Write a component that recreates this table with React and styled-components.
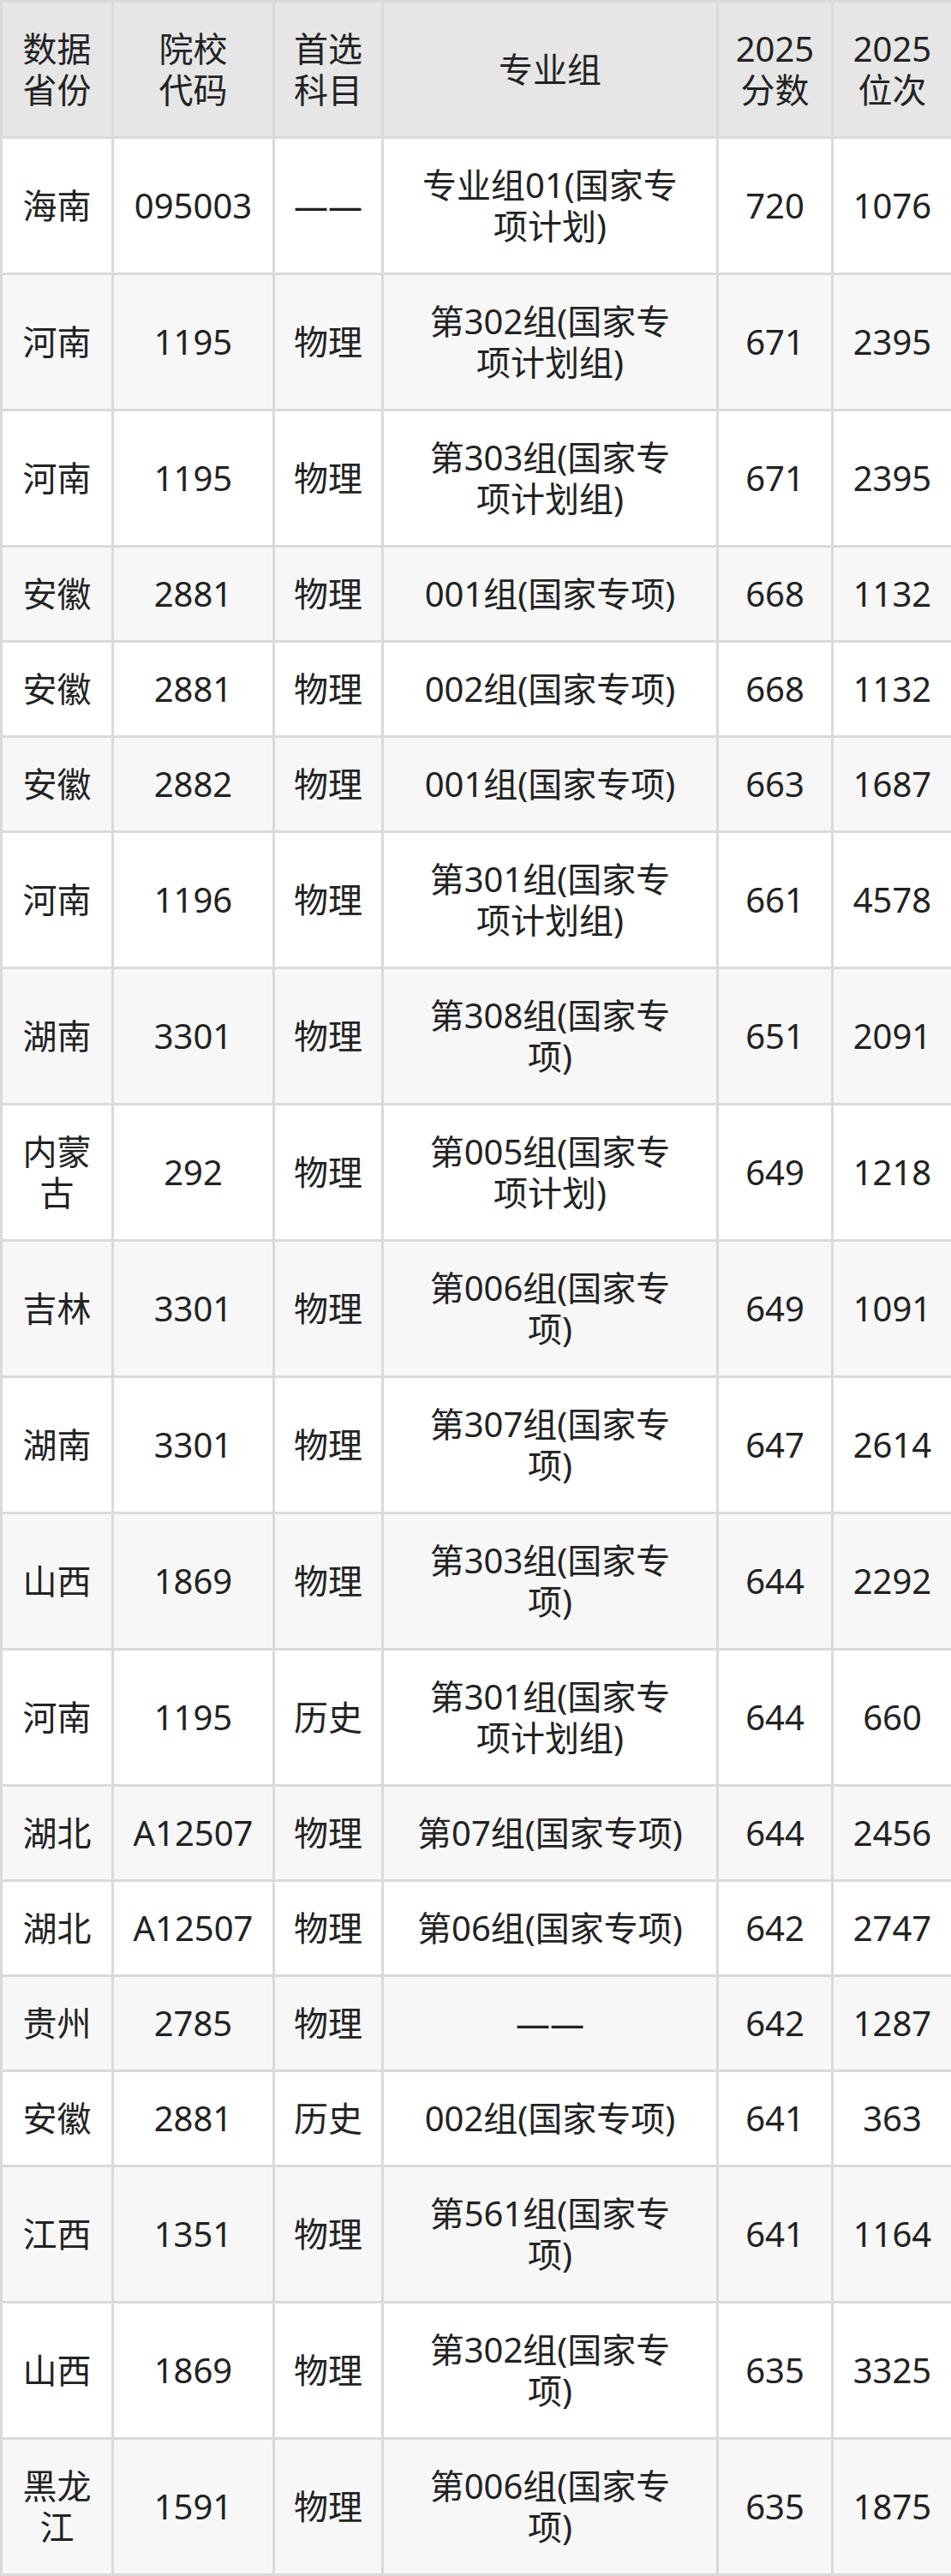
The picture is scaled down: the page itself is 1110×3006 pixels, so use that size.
import React from "react";
import styled, { createGlobalStyle } from "styled-components";

const GlobalStyle = createGlobalStyle`
	html, body {
		margin: 0;
		padding: 0;
		background: #ffffff;
	}
	body {
		font-family: "Noto Sans", "Noto Sans CJK SC", sans-serif;
		color: #222222;
	}
`;

const headers = ["数据\n省份", "院校\n代码", "首选\n科目", "专业组", "2025\n分数", "2025\n位次"];

const widths = [130, 188, 127, 391, 134, 140];

const rows = [
	["海南", "095003", "——", "专业组01(国家专\n项计划)", "720", "1076"],
	["河南", "1195", "物理", "第302组(国家专\n项计划组)", "671", "2395"],
	["河南", "1195", "物理", "第303组(国家专\n项计划组)", "671", "2395"],
	["安徽", "2881", "物理", "001组(国家专项)", "668", "1132"],
	["安徽", "2881", "物理", "002组(国家专项)", "668", "1132"],
	["安徽", "2882", "物理", "001组(国家专项)", "663", "1687"],
	["河南", "1196", "物理", "第301组(国家专\n项计划组)", "661", "4578"],
	["湖南", "3301", "物理", "第308组(国家专\n项)", "651", "2091"],
	["内蒙\n古", "292", "物理", "第005组(国家专\n项计划)", "649", "1218"],
	["吉林", "3301", "物理", "第006组(国家专\n项)", "649", "1091"],
	["湖南", "3301", "物理", "第307组(国家专\n项)", "647", "2614"],
	["山西", "1869", "物理", "第303组(国家专\n项)", "644", "2292"],
	["河南", "1195", "历史", "第301组(国家专\n项计划组)", "644", "660"],
	["湖北", "A12507", "物理", "第07组(国家专项)", "644", "2456"],
	["湖北", "A12507", "物理", "第06组(国家专项)", "642", "2747"],
	["贵州", "2785", "物理", "——", "642", "1287"],
	["安徽", "2881", "历史", "002组(国家专项)", "641", "363"],
	["江西", "1351", "物理", "第561组(国家专\n项)", "641", "1164"],
	["山西", "1869", "物理", "第302组(国家专\n项)", "635", "3325"],
	["黑龙\n江", "1591", "物理", "第006组(国家专\n项)", "635", "1875"],
];

const App = () => {
	return (
		<>
			<GlobalStyle />
			<ScoreTable>
				<colgroup>
					{widths.map((w, i) => (
						<col key={i} style={{ width: w }} />
					))}
				</colgroup>
				<thead>
					<tr>
						{headers.map((h, i) => (
							<HeadCell key={i}>{h}</HeadCell>
						))}
					</tr>
				</thead>
				<tbody>
					{rows.map((r, i) => (
						<Row key={i} $striped={i % 2 === 1}>
							{r.map((c, j) => (
								<Cell key={j}>{c}</Cell>
							))}
						</Row>
					))}
				</tbody>
			</ScoreTable>
		</>
	);
};

export default App;

const ScoreTable = styled.table`
	width: 1110px;
	table-layout: fixed;
	border-collapse: collapse;
	font-size: 40px;
	line-height: 48px;
`;

const HeadCell = styled.th`
	background: #e6e6e6;
	border: 3px solid #dadada;
	padding: 30px 4px;
	font-weight: 400;
	text-align: center;
	vertical-align: middle;
	white-space: pre-line;
	color: #222222;
`;

const Row = styled.tr`
	background: ${(p) => (p.$striped ? "#f7f7f7" : "#ffffff")};
`;

const Cell = styled.td`
	border: 3px solid #dadada;
	padding: 30px 4px;
	text-align: center;
	vertical-align: middle;
	white-space: pre-line;
`;
